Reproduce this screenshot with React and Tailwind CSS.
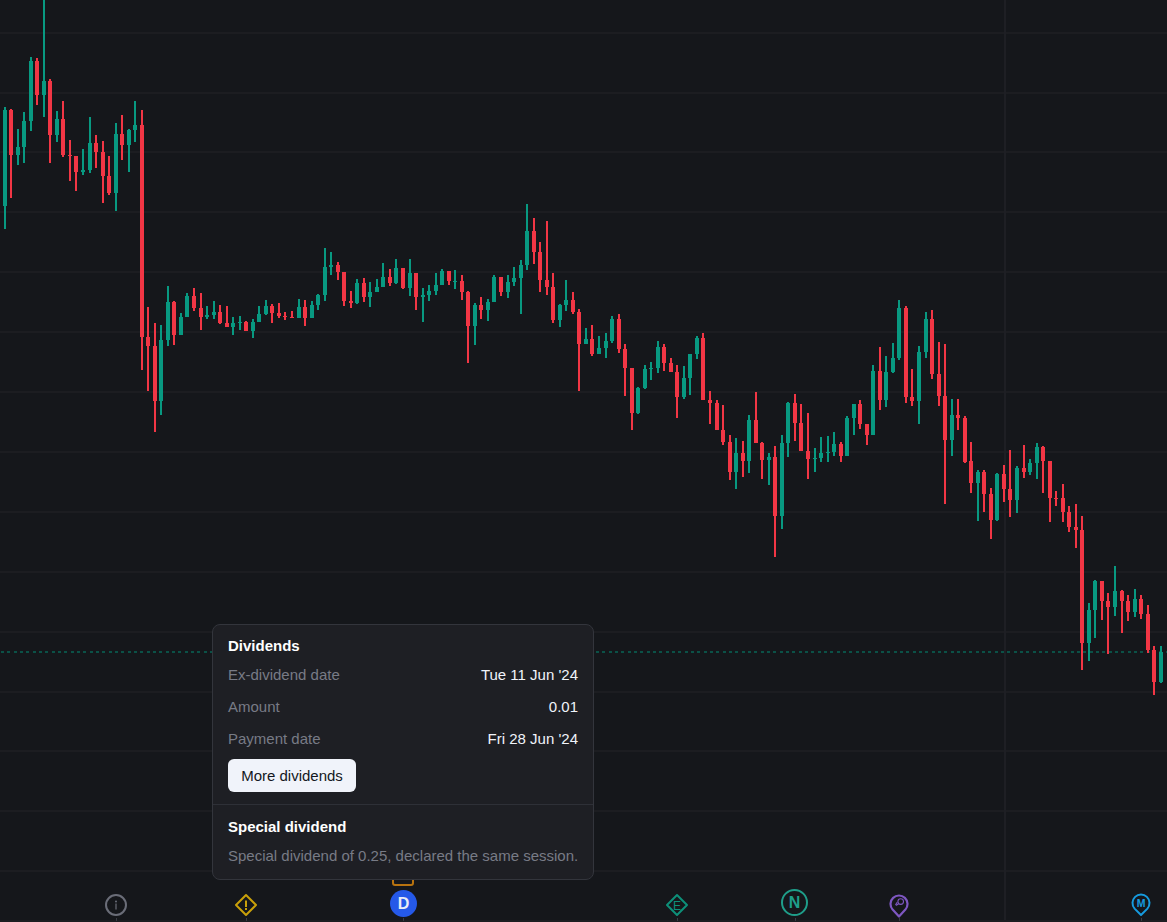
const G = 1, R = 0;
// x, colour, wick top, body top, body bottom, wick bottom
const candles = [
[5,G,107,110,206,229],[11,R,109,110,155,198],[18,G,129,147,155,165],[24,G,112,121,147,163],[31,G,57,61,121,131],[37,R,58,61,95,105],[44,G,0,81,95,117],[50,R,79,81,135,163],[57,G,111,119,135,142],[63,R,101,119,155,157],[70,R,140,155,156,181],[76,R,156,156,172,191],[83,G,149,170,172,175],[90,G,117,143,170,173],[96,R,135,143,152,168],[103,R,141,152,176,203],[109,R,156,176,193,195],[116,G,123,134,193,211],[122,R,115,134,145,160],[129,G,129,130,145,172],[135,G,101,125,130,142],[142,R,110,125,337,370],
[148,R,307,337,346,391],[155,R,323,346,401,432],[161,G,325,340,401,415],[168,G,286,302,340,346],[174,R,301,302,335,345],[181,G,313,317,335,335],[187,G,293,296,317,317],[194,R,288,296,308,311],[201,R,293,308,317,330],[207,G,306,315,317,319],[214,G,301,312,315,319],[220,R,305,312,323,324],[227,R,306,323,327,327],[233,G,317,323,327,335],[240,G,316,322,323,330],[246,R,321,322,331,331],[253,G,319,322,331,338],[259,G,306,314,322,322],[266,G,300,306,314,315],[272,R,304,306,313,323],[279,R,303,313,316,318],[285,R,312,316,317,320],[292,R,311,317,318,318],[299,G,299,307,318,318],
[305,R,300,307,318,326],[312,G,301,305,318,318],[318,G,294,295,305,310],[325,G,248,267,295,301],[331,G,252,265,267,275],[338,R,262,265,272,280],[344,R,272,272,301,306],[351,R,291,301,303,308],[357,G,279,283,303,304],[364,R,278,283,297,302],[370,G,282,292,297,307],[377,G,279,287,292,292],[383,G,263,277,287,287],[390,R,269,277,283,286],[396,G,259,268,283,284],[403,R,268,268,288,289],[410,G,259,273,288,296],[416,R,273,273,297,310],[423,G,288,295,297,322],[429,G,285,291,295,301],[436,G,273,285,291,295],[442,G,269,271,285,285],[449,R,271,271,281,285],[455,G,270,281,282,289],[462,R,275,281,292,300],[468,R,291,292,326,363],[475,G,303,305,326,345],[481,R,297,305,310,319],[488,G,299,302,310,321],[494,G,275,277,302,302],[501,R,277,277,292,296],[508,G,275,282,292,298],[514,G,267,278,282,286],[521,G,260,265,278,314],[527,G,204,231,265,270],[534,R,218,231,252,264],[540,R,242,252,280,292],[547,R,221,280,287,295],[553,R,273,287,320,323],[560,G,304,305,320,327],[566,G,280,300,305,311],[573,R,292,300,312,314],[579,R,309,312,344,391],
[586,G,328,339,344,344],[592,R,325,339,354,356],[599,G,336,348,354,354],[606,G,333,341,348,358],[612,G,316,319,341,343],[619,R,314,319,349,353],[625,R,344,349,368,396],[632,R,368,368,413,430],[638,G,387,388,413,414],[645,G,365,369,388,389],[651,G,362,368,369,380],[658,G,341,347,368,373],[664,R,344,347,363,371],[671,R,358,363,372,372],[677,R,365,372,397,418],[684,G,366,378,397,399],[690,G,354,354,378,395],[697,G,336,338,354,359],[703,R,333,338,400,400],[710,R,391,400,403,424],[717,R,400,403,430,430],[723,R,405,430,442,445],[730,R,435,442,472,480],[736,G,438,453,472,489],[743,R,441,453,461,477],[749,G,415,420,461,473],[756,R,392,420,443,443],[762,R,442,443,460,479],[769,G,453,457,460,485],[775,R,446,457,516,557],[782,G,435,443,516,529],[788,G,402,403,443,457],[795,R,394,403,423,441],[801,R,404,423,451,451],[808,R,413,451,459,479],[815,G,448,458,459,472],[821,G,437,453,458,462],[828,G,436,452,453,462],[834,G,432,444,452,456],[841,R,442,444,456,462],[847,G,416,418,456,456],[854,G,404,404,418,435],[860,R,400,404,424,429],
[867,R,424,424,435,445],[873,G,365,371,435,435],[880,R,347,371,400,410],[886,G,356,372,400,407],[893,G,343,358,372,373],[899,G,300,308,358,360],[906,R,306,308,397,403],[912,R,369,397,401,406],[919,G,346,352,401,424],[926,G,312,319,352,358],[932,R,310,319,374,379],[939,R,342,374,396,406],[945,R,344,396,440,504],[952,G,399,415,440,456],[958,R,399,415,418,430],[965,R,416,418,462,463],[971,R,442,461,483,493],[978,G,470,472,483,521],[984,R,470,472,494,512],[991,R,488,494,520,539],[997,G,473,474,520,521],[1004,R,465,474,489,502],[1010,R,450,489,500,517],[1017,G,466,468,500,513],[1024,R,445,468,472,478],[1030,G,459,463,472,475],[1037,G,443,447,463,479],[1043,R,446,447,461,493],[1050,R,461,461,498,522],[1056,R,491,498,499,506],[1063,R,484,498,512,522],[1069,R,506,512,527,532],[1076,R,504,527,530,548],[1082,R,516,530,643,670],
[1089,G,603,610,643,661],[1095,G,580,581,610,638],[1102,R,581,581,601,620],[1108,R,593,601,607,654],[1115,G,566,591,607,616],[1122,R,590,591,601,633],[1128,R,595,601,612,621],[1135,G,589,599,612,617],[1141,R,595,599,614,619],[1148,R,605,614,650,653],[1154,R,646,650,682,695],[1161,G,646,652,682,683],
];
const gridY = [33,93,152,212,272,332,392,452,512,572,632,692,751,811,871];
const FONT = "font-['Liberation_Sans',Arial,sans-serif]";

function Chart() {
  return (
    <svg viewBox="0 0 1167 922" width="1167" height="922" className="block" shapeRendering="crispEdges">
      {gridY.map((y) => <rect key={y} x="0" y={y - 1} width="1167" height="2" fill="#1c1d21" />)}
      <rect x="1004" y="0" width="2" height="922" fill="#1e1f24" />
      <line x1="1" x2="1167" y1="652" y2="652" stroke="#0b5147" strokeWidth="2" strokeDasharray="3 3.33" />
      {candles.map(([x, c, wt, bt, bb, wb]) => {
        const col = c ? "#089981" : "#f23645";
        return (
          <g key={x} fill={col}>
            <rect x={x - 1} y={wt} width="2" height={wb - wt} />
            <rect x={x - 2} y={bt} width="4" height={Math.max(bb - bt, 1)} />
          </g>
        );
      })}
      <rect x="0" y="920" width="1167" height="2" fill="#1d1e22" />
      {[116, 246, 403, 677, 795, 899, 1141].map((x) => <rect key={x} x={x} y="918" width="1" height="3" fill="#3a3c44" />)}
    </svg>
  );
}

function Row({ label, value }) {
  return (
    <div className="flex h-8 items-center justify-between">
      <span className="text-[#787b86]">{label}</span>
      <span className="text-[#f0f3fa]">{value}</span>
    </div>
  );
}

function Tooltip() {
  return (
    <div className="absolute left-[212px] top-[624px] z-10 h-[256px] w-[382px] rounded-lg border border-[#33353c] bg-[#1e1f24] text-[15px] leading-5">
      <div className="px-[15px] pt-[11px]">
        <div className="font-bold text-white">Dividends</div>
        <div className="mt-[3px]">
          <Row label="Ex-dividend date" value="Tue 11 Jun '24" />
          <Row label="Amount" value="0.01" />
          <Row label="Payment date" value="Fri 28 Jun '24" />
        </div>
        <button className="mt-1 h-[33px] w-32 rounded-md bg-[#f0f3fa] text-center text-[15px] text-[#131722]">More dividends</button>
      </div>
      <div className="mt-3 border-t border-[#2e3037] px-[15px] pt-[12px]">
        <div className="font-bold text-white">Special dividend</div>
        <div className="mt-[9px] whitespace-nowrap text-[#787b86]">Special dividend of 0.25, declared the same session.</div>
      </div>
    </div>
  );
}

function Icon({ x, y, w, h, children }) {
  return (
    <svg className="absolute" style={{ left: x, top: y }} width={w} height={h} viewBox={`0 0 ${w} ${h}`} fill="none">
      {children}
    </svg>
  );
}

function Markers() {
  return (
    <>
      <Icon x={104} y={894} w={24} h={24}>
        <circle cx="12" cy="11" r="10" stroke="#6a6d78" strokeWidth="2" />
        <circle cx="12" cy="7.5" r="1" fill="#6a6d78" />
        <rect x="11.4" y="9.5" width="1.2" height="6" fill="#6a6d78" />
      </Icon>
      <Icon x={234} y={893} w={24} h={24}>
        <path d="M12 2 L22 12 L12 22 L2 12 Z" stroke="#c9a00a" strokeWidth="2" strokeLinejoin="round" />
        <rect x="11" y="7.5" width="2" height="6.5" fill="#c9a00a" />
        <rect x="11" y="15" width="2" height="2" fill="#c9a00a" />
      </Icon>
      <div className="absolute left-[392px] top-[870px] h-4 w-[22px] rounded-b-[3px] border-2 border-[#b8730f]" />
      <div className="absolute left-[390px] top-[890px] flex h-[27px] w-[27px] items-center justify-center rounded-full bg-[#2559e8] text-base font-bold text-[#e8ecf6]">D</div>
      <Icon x={665} y={893} w={24} h={24}>
        <path d="M12 2 L22 12 L12 22 L2 12 Z" stroke="#0d8f79" strokeWidth="2" strokeLinejoin="round" />
        <text x="12" y="16.5" textAnchor="middle" fontSize="12" fill="#0d8f79">E</text>
      </Icon>
      <div className="absolute left-[781px] top-[889px] flex h-[27px] w-[27px] items-center justify-center rounded-full border-2 border-[#1f9e8a] text-base font-bold text-[#1f9e8a]">N</div>
      <Icon x={889} y={894} w={20} h={24}>
        <path d="M10 22.5 L3.6 15.6 A8.5 8.5 0 1 1 16.4 15.6 Z" stroke="#7e57c2" strokeWidth="2.2" strokeLinejoin="round" />
        <circle cx="11.7" cy="7.6" r="2.8" stroke="#7e57c2" strokeWidth="1.1" />
        <path d="M9.6 9.7 L7.4 11.2 L6.7 10.5 L8.2 8.2" stroke="#7e57c2" strokeWidth="1.1" strokeLinejoin="round" />
      </Icon>
      <Icon x={1131} y={893} w={20} h={24}>
        <path d="M10 22 L3.6 15.6 A8.5 8.5 0 1 1 16.4 15.6 Z" stroke="#169bdf" strokeWidth="2" strokeLinejoin="round" />
        <text x="10" y="13.5" textAnchor="middle" fontSize="10.5" fontWeight="700" fill="#169bdf">M</text>
      </Icon>
    </>
  );
}

export default function App() {
  return (
    <div className={`relative h-[922px] w-[1167px] overflow-hidden bg-[#15171b] ${FONT}`}>
      <Chart />
      <Markers />
      <Tooltip />
    </div>
  );
}
